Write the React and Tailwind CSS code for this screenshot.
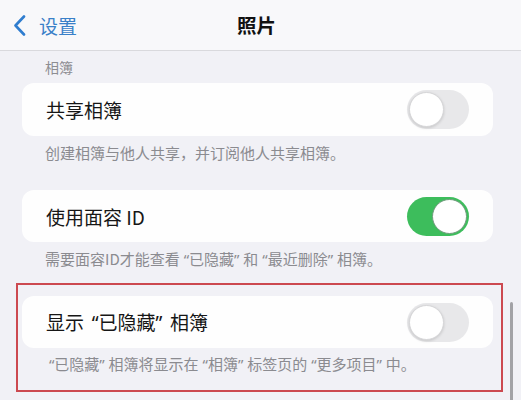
import React from 'react';

const FONT = '"Noto Sans CJK SC", "Noto Sans", sans-serif';
const LATIN = '"Noto Sans", "Liberation Sans", sans-serif';

// iOS quotes sit narrower than full-width CJK quotes, hugging the quoted text
function Q({ open, small }) {
  return (
    <span
      className={`inline-block ${small ? 'w-[0.62em]' : 'w-[0.76em]'} ${open ? 'text-right' : 'text-left'}`}
      style={{ fontFamily: LATIN }}
    >
      {open ? '“' : '”'}
    </span>
  );
}

function Toggle({ on }) {
  if (on) {
    return (
      <div className="w-[62px] h-[39px] rounded-full bg-[#3dbd5c] flex items-center justify-end pr-[2px]">
        <div className="w-[35px] h-[35px] rounded-full bg-white border border-[#6f9c7c]" />
      </div>
    );
  }
  return (
    <div className="w-[62px] h-[39px] rounded-full bg-[#e8e8ea] flex items-center pl-[2px]">
      <div className="w-[35px] h-[35px] rounded-full bg-white border border-[#d6d6d8] shadow-[0_1px_3px_rgba(0,0,0,0.15)]" />
    </div>
  );
}

function Row({ children, on, h }) {
  return (
    <div className={`bg-[#fefefe] rounded-[12px] flex items-center justify-between pl-[24px] pr-[24px] ${h}`}>
      <span className="text-[19px] text-[#161616] leading-none">{children}</span>
      <Toggle on={on} />
    </div>
  );
}

export default function App() {
  return (
    <div
      className="relative w-[521px] h-[400px] overflow-hidden bg-[#f1f1f6]"
      style={{ fontFamily: FONT }}
    >
      {/* nav bar */}
      <div className="h-[51px] bg-[#f8f8fa] border-b border-[#d9d9dd] flex items-center pl-[13px]">
        <svg width="13" height="21" viewBox="0 0 13 21" className="mt-[1px]">
          <path d="M11 1.5 L2.5 10.5 L11 19.5" fill="none" stroke="#2f7dcf" strokeWidth="2.6" strokeLinecap="round" strokeLinejoin="round" />
        </svg>
        <span className="ml-[13px] text-[19px] text-[#3a80c8] leading-none">设置</span>
        <span className="ml-[160px] text-[19.5px] font-bold text-[#111] leading-none">照片</span>
      </div>

      {/* section header */}
      <div className="h-[32px] flex items-center pl-[45px] text-[14px] text-[#8d8d92]">相簿</div>

      <div className="pl-[22px] pr-[28px]">
        <Row on={false} h="h-[53px]">共享相簿</Row>
      </div>
      <div className="h-[54px] pl-[45px] pt-[7px] text-[15px] leading-[20px] text-[#8b8b90]">
        创建相簿与他人共享，并订阅他人共享相簿。
      </div>

      <div className="pl-[22px] pr-[28px]">
        <Row on={true} h="h-[52px]">使用面容 ID</Row>
      </div>
      <div className="h-[41px] pl-[45px] pt-[7px] text-[15px] leading-[20px] text-[#8b8b90]">
        需要面容ID才能查看<Q open small />已隐藏<Q small />和<Q open small />最近删除<Q small />相簿。
      </div>

      {/* highlighted group */}
      <div className="ml-[16px] w-[487px] h-[109px] border-2 border-[#cc4950] pt-[11px] pl-[4px] pr-[8px]">
        <Row on={false} h="h-[52px]">
          显示<Q open />已隐藏<Q />相簿
        </Row>
        <div className="pl-[23px] pt-[6px] text-[15px] leading-[20px] text-[#8b8b90]">
          <Q open small />已隐藏<Q small />相簿将显示在<Q open small />相簿<Q small />标签页的<Q open small />更多项目<Q small />中。
        </div>
      </div>

      {/* scroll indicator */}
      <div className="absolute right-[8px] top-[302px] w-[3px] h-[110px] rounded-full bg-[#a2a2a6]" />
    </div>
  );
}
